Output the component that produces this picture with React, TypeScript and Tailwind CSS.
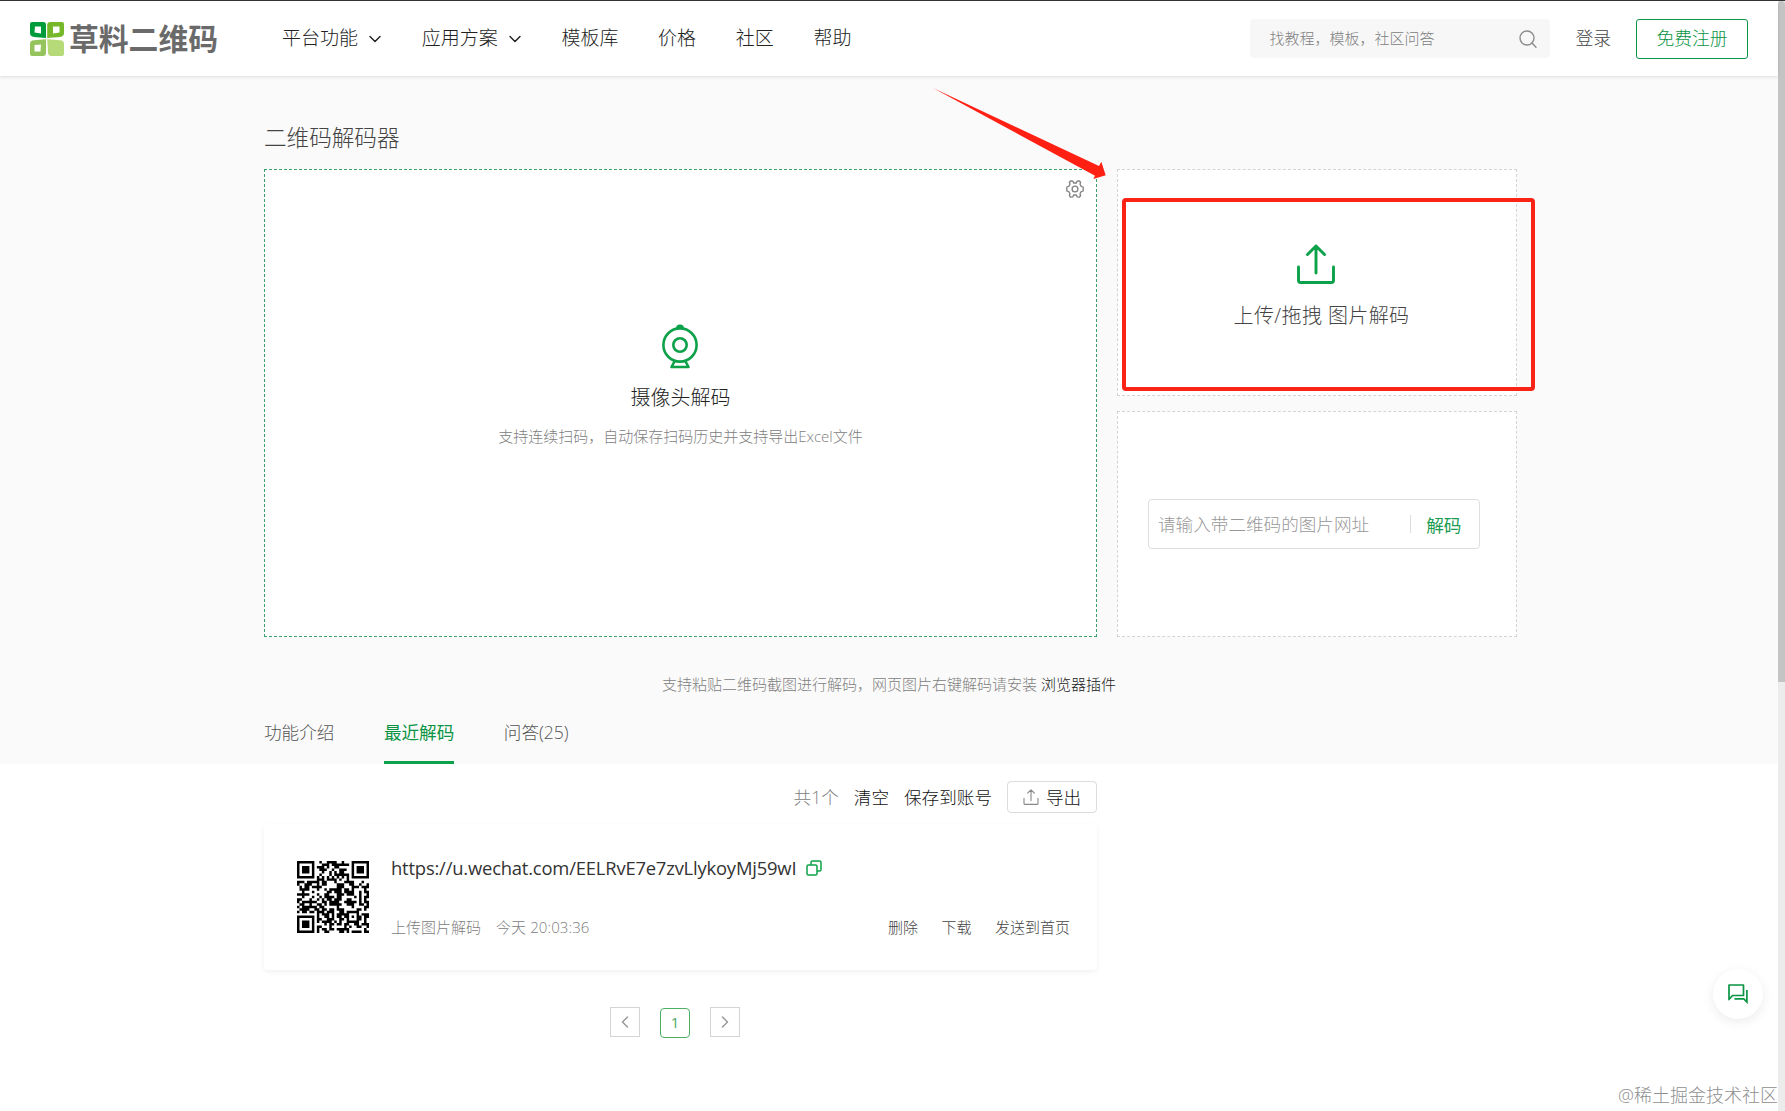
import React from 'react';
import { ChevronDown, ChevronLeft, ChevronRight } from 'lucide-react';

const RECORD_URL = 'https://u.wechat.com/EELRvE7e7zvLlykoyMj59wI';

const NAV_ITEMS = [
  { label: '平台功能', hasMenu: true },
  { label: '应用方案', hasMenu: true },
  { label: '模板库', hasMenu: false },
  { label: '价格', hasMenu: false },
  { label: '社区', hasMenu: false },
  { label: '帮助', hasMenu: false },
];

const TABS = ['功能介绍', '最近解码', '问答(25)'];

// Version 3-L QR code with mask 0: 29x29 modules, 55 data + 15 error correction codewords
const buildQr = (text: string): boolean[][] => {
  const size = 29;
  const mul = (a: number, b: number) => {
    let z = 0;
    for (let i = 7; i >= 0; i--) {
      z = (z << 1) ^ ((z >>> 7) * 0x11d);
      z ^= ((b >>> i) & 1) * a;
    }
    return z;
  };

  const bits: number[] = [];
  const push = (v: number, n: number) => {
    for (let i = n - 1; i >= 0; i--) bits.push((v >>> i) & 1);
  };
  push(4, 4);
  push(text.length, 8);
  for (const c of text) push(c.charCodeAt(0), 8);
  push(0, 4);
  for (let pad = 0xec; bits.length < 440; pad ^= 0xfd) push(pad, 8);

  const data: number[] = [];
  for (let i = 0; i < 440; i += 8) data.push(parseInt(bits.slice(i, i + 8).join(''), 2));

  // Reed-Solomon
  const divisor: number[] = new Array(15).fill(0);
  divisor[14] = 1;
  let root = 1;
  for (let i = 0; i < 15; i++) {
    for (let j = 0; j < 15; j++) {
      divisor[j] = mul(divisor[j], root);
      if (j < 14) divisor[j] ^= divisor[j + 1];
    }
    root = mul(root, 2);
  }
  const ecc: number[] = new Array(15).fill(0);
  data.forEach(b => {
    const f = b ^ (ecc.shift() as number);
    ecc.push(0);
    divisor.forEach((d, i) => { ecc[i] ^= mul(d, f); });
  });
  ecc.forEach(b => push(b, 8));

  const grid: boolean[][] = Array.from({ length: size }, () => new Array(size).fill(false));
  const fixed: boolean[][] = Array.from({ length: size }, () => new Array(size).fill(false));
  const set = (x: number, y: number, on: boolean) => {
    if (x < 0 || y < 0 || x >= size || y >= size) return;
    grid[y][x] = on;
    fixed[y][x] = true;
  };

  for (let i = 0; i < size; i++) {
    set(6, i, i % 2 === 0);
    set(i, 6, i % 2 === 0);
  }
  [[3, 3], [size - 4, 3], [3, size - 4]].forEach(([cx, cy]) => {
    for (let dy = -4; dy <= 4; dy++)
      for (let dx = -4; dx <= 4; dx++) {
        const d = Math.max(Math.abs(dx), Math.abs(dy));
        set(cx + dx, cy + dy, d !== 2 && d !== 4);
      }
  });
  for (let dy = -2; dy <= 2; dy++)
    for (let dx = -2; dx <= 2; dx++)
      set(22 + dx, 22 + dy, Math.max(Math.abs(dx), Math.abs(dy)) !== 1);

  // Format bits
  const info = 1 << 3;
  let rem = info;
  for (let i = 0; i < 10; i++) rem = (rem << 1) ^ ((rem >>> 9) * 0x537);
  const format = ((info << 10) | rem) ^ 0x5412;
  const bit = (i: number) => ((format >>> i) & 1) === 1;
  for (let i = 0; i <= 5; i++) set(8, i, bit(i));
  set(8, 7, bit(6));
  set(8, 8, bit(7));
  set(7, 8, bit(8));
  for (let i = 9; i < 15; i++) set(14 - i, 8, bit(i));
  for (let i = 0; i < 8; i++) set(size - 1 - i, 8, bit(i));
  for (let i = 8; i < 15; i++) set(8, size - 15 + i, bit(i));
  set(8, size - 8, true);

  let n = 0;
  for (let right = size - 1; right >= 1; right -= 2) {
    if (right === 6) right = 5;
    for (let v = 0; v < size; v++)
      for (let j = 0; j < 2; j++) {
        const x = right - j;
        const y = ((right + 1) & 2) === 0 ? size - 1 - v : v;
        if (fixed[y][x]) continue;
        grid[y][x] = (bits[n++] === 1) !== ((x + y) % 2 === 0);
      }
  }
  return grid;
};

const QrCode: React.FC<{ text: string }> = ({ text }) => {
  const d = buildQr(text)
    .map((row, y) => row.map((on, x) => (on ? `M${x} ${y}h1v1h-1z` : '')).join(''))
    .join('');
  return (
    <svg viewBox="0 0 29 29" className="w-[72px] h-[72px] shrink-0">
      <path d={d} fill="#000" />
    </svg>
  );
};

const LogoIcon: React.FC = () => (
  <svg viewBox="0 0 34 34" className="w-[34px] h-[34px]">
    <path fillRule="evenodd" fill="#009c3c" d="M2 0H13.5Q16 0 16 3V16L4 15Q0 14.500 0 11V2Q0 0 2 0ZM5 4.500L4.500 10.500L11 11.500V4.500Z" />
    <path fillRule="evenodd" fill="#76b82a" d="M20.500 0H32Q34 0 34 2V11Q34 14.500 30 15L17.200 16V3Q17.200 0 20.500 0ZM23 4.500V11.500L29.500 10.500V4.500Z" />
    <path fillRule="evenodd" fill="#95c45c" d="M16 17.200V30.500Q16 34 13 34H2Q0 34 0 32V22Q0 18.500 4 18.200ZM11 22.500L4.500 23V29.500H10.500Z" />
    <path fill="#b7da78" d="M17.200 17.200L30 18.200Q34 18.500 34 22V32Q34 34 32 34H21.500Q18 34 18 30.500Z" />
  </svg>
);

const SearchIcon: React.FC = () => (
  <svg viewBox="0 0 18 18" className="w-[18px] h-[18px]" fill="none" stroke="#8c8c8c" strokeWidth={1.4}>
    <circle cx="8" cy="8" r="7" />
    <path d="M13 13L17 17.200" strokeLinecap="round" />
  </svg>
);

const GearIcon: React.FC = () => (
  <svg viewBox="0 0 18 18" className="w-[18px] h-[18px]" fill="none" stroke="#808080" strokeWidth={1.3} strokeLinejoin="round">
    <path d="M4.800 .8L6.900 1.200L7.600 3H10.400L11.100 1.200L13.200 .8L14.600 2.200L14 4.300L15.200 6.400L17.200 7V11L15.200 11.600L14 13.700L14.600 15.800L13.200 17.200L11.100 16.800L10.400 15H7.600L6.900 16.800L4.800 17.200L3.400 15.800L4 13.700L2.800 11.600L.8 11V7L2.800 6.400L4 4.300L3.400 2.200Z" />
    <circle cx="9" cy="9" r="2.900" />
  </svg>
);

const CameraIcon: React.FC = () => (
  <svg viewBox="0 0 36 45" className="w-9 h-[45px] mr-[2px]" fill="none" stroke="#0da149" strokeWidth={2.6}>
    <circle cx="18" cy="21" r="16.600" />
    <circle cx="18" cy="21" r="6.700" />
    <path d="M15.300 4.500A2.700 2.700 0 0 1 20.700 4.500M12.500 37.500L9.500 43H26.500L23.500 37.500" strokeLinejoin="round" />
  </svg>
);

const UploadIcon: React.FC<{ className: string; strokeWidth: number }> = ({ className, strokeWidth }) => (
  <svg viewBox="0 0 38 40" className={className} fill="none" stroke="currentColor" strokeWidth={strokeWidth} strokeLinecap="round" strokeLinejoin="round">
    <path d="M1.500 23V36.500Q1.500 38.500 3.500 38.500H34.500Q36.500 38.500 36.500 36.500V23M19 29V2M10.500 10.500L19 2L27.500 10.500" />
  </svg>
);

const CopyIcon: React.FC = () => (
  <svg viewBox="0 0 16 16" className="w-4 h-4" fill="none" stroke="#0da149" strokeWidth={1.5}>
    <rect x="1" y="5" width="10" height="10" rx="1.500" />
    <path d="M5 5V2.500Q5 1 6.500 1H13.500Q15 1 15 2.500V9.500Q15 11 13.500 11H11" />
  </svg>
);

const ChatIcon: React.FC = () => (
  <svg viewBox="0 0 20 20" className="w-5 h-5" fill="none" stroke="#0b9444" strokeWidth={1.7}>
    <path d="M1 1H15.500V11.500H4.500L1 15.500Z" strokeLinejoin="round" />
    <path d="M18.900 6V18L15.800 14.800H6.500" />
  </svg>
);

const Header: React.FC = () => (
  <header className="flex items-center h-[76px] pl-[30px] pr-[30px] bg-white border-t border-[#333] shadow-[0_1px_3px_rgba(0,0,0,0.12)] relative">
    <div className="flex items-center gap-[5px] w-[252px] shrink-0">
      <LogoIcon />
      <span className="text-[29.800px] font-bold leading-none text-[#6a6a6a] whitespace-nowrap">草料二维码</span>
    </div>
    <nav className="flex items-center gap-[39.700px] text-[19px] text-[#222]">
      {NAV_ITEMS.map(item => (
        <a key={item.label} className="flex items-center whitespace-nowrap">
          {item.label}
          {item.hasMenu && <ChevronDown className="w-5 h-5 ml-[7px] -mr-[3px]" strokeWidth={1.7} />}
        </a>
      ))}
    </nav>
    <div className="ml-auto flex items-center">
      <div className="flex items-center justify-between w-[300px] h-[39px] pl-[19px] pr-[13px] rounded-sm bg-[#f7f7f7] text-[15px] text-[#808080]">
        <span>找教程，模板，社区问答</span>
        <SearchIcon />
      </div>
      <a className="ml-[25px] text-[17.800px] text-[#444]">登录</a>
      <button className="ml-[25px] w-[112px] h-10 border border-[#0b9444] rounded-[3px] text-[17.800px] text-[#0b9444]">免费注册</button>
    </div>
  </header>
);

const CameraPanel: React.FC = () => (
  <div className="relative flex flex-col items-center w-[833px] h-[468px] pt-[154px] bg-white border border-dashed border-[#3ba070]">
    <div className="absolute top-[10px] right-[12px]"><GearIcon /></div>
    <CameraIcon />
    <h2 className="mt-[14px] text-[20px] leading-[30px] text-[#222]">摄像头解码</h2>
    <p className="mt-[12px] text-[15px] leading-[22px] text-[#808080]">支持连续扫码，自动保存扫码历史并支持导出Excel文件</p>
  </div>
);

const UploadPanel: React.FC = () => (
  <div className="relative flex flex-col items-center h-[227px] pt-[74px] bg-white border border-dashed border-[#d4d4d4]">
    <UploadIcon className="w-[38px] h-10 mr-[2px] text-[#0da149]" strokeWidth={2.9} />
    <p className="mt-[17px] pl-[9px] text-[20px] tracking-[0.400px] leading-[30px] text-[#444]">上传/拖拽 图片解码</p>
    <div className="absolute left-[4px] top-[28px] w-[413px] h-[193px] border-4 border-[#f92316] rounded-[4px]" />
  </div>
);

const UrlPanel: React.FC = () => (
  <div className="h-[226px] pt-[87px] pl-[30px] bg-white border border-dashed border-[#d4d4d4]">
    <div className="flex items-center w-[332px] h-[50px] pl-[9px] border border-[#dcdfe0] rounded-[4px] text-[17.600px]">
      <span className="text-[#999]">请输入带二维码的图片网址</span>
      <span className="ml-[41px] w-px h-[18px] bg-[#dcdcdc]" />
      <button className="ml-[15px] pt-[2px] font-normal text-[#1a9b50]">解码</button>
    </div>
  </div>
);

const Arrow: React.FC = () => (
  <svg viewBox="0 0 174 93" className="absolute left-[933px] top-[88px] w-[174px] h-[93px]">
    <path d="M0 0L166 78L168.300 73.700L172.700 87.300L160.300 91L162 87.700Z" fill="#ff2014" />
  </svg>
);

const RecordCard: React.FC = () => (
  <div className="flex w-[833px] h-[146px] pt-[37px] pl-[33px] pr-[27px] bg-white rounded-sm shadow-[0_2px_5px_rgba(0,0,0,0.06)]">
    <QrCode text={RECORD_URL} />
    <div className="flex flex-col flex-1 justify-between ml-[22px] h-[77px]">
      <div className="flex items-center gap-[10px] h-[13px]">
        <span className="text-[18.400px] tracking-[-0.190px] font-normal text-[#333]">{RECORD_URL}</span>
        <CopyIcon />
      </div>
      <div className="flex items-center h-[22px] text-[15px] leading-[22px]">
        <span className="text-[#808080]">上传图片解码</span>
        <span className="ml-[15px] tracking-[0.100px] text-[#808080]">今天 20:03:36</span>
        <div className="ml-auto flex gap-[23.500px] text-[#444]">
          <a>删除</a>
          <a>下载</a>
          <a>发送到首页</a>
        </div>
      </div>
    </div>
  </div>
);

const App: React.FC = () => {
  return (
    <div className="relative flex h-[1111px] w-full overflow-hidden bg-white font-['Open_Sans','Noto_Sans_CJK_SC',sans-serif] font-light">
      <div className="flex-1 min-w-0">
        <Header />
        <section className="h-[688px] pl-[264px] pt-[45px] bg-[#fafafa]">
          <h1 className="text-[22.600px] leading-[34px] text-[#444]">二维码解码器</h1>
          <div className="flex gap-5 mt-[14px]">
            <CameraPanel />
            <div className="flex flex-col gap-[15px] w-[400px]">
              <UploadPanel />
              <UrlPanel />
            </div>
          </div>
          <p className="mt-[36px] w-[1250px] text-center text-[15px] leading-[22px] text-[#808080]">
            支持粘贴二维码截图进行解码，网页图片右键解码请安装 <a className="text-[#222]">浏览器插件</a>
          </p>
          <div className="flex gap-[49.500px] mt-[17px] text-[17.600px] text-[#555]">
            {TABS.map((tab, i) => (
              <a
                key={tab}
                className={i === 1
                  ? 'h-[52px] leading-[40px] text-[#0b9444] font-normal border-b-[3px] border-[#0da149]'
                  : 'h-[52px] leading-[40px]'}
              >
                {tab}
              </a>
            ))}
          </div>
        </section>
        <section className="w-[1097px] pl-[264px] pt-[17px]">
          <div className="flex items-center justify-end gap-[15px] h-8 text-[17.600px] text-[#111]">
            <span className="text-[#808080]">共1个</span>
            <a>清空</a>
            <a>保存到账号</a>
            <button className="flex items-center justify-center gap-[7px] w-[90px] h-8 border border-[#dcdcdc] rounded-sm">
              <UploadIcon className="w-4 h-4 text-[#888]" strokeWidth={2.8} />
              导出
            </button>
          </div>
          <div className="mt-[11px]">
            <RecordCard />
          </div>
          <div className="flex items-start gap-5 mt-[37px] ml-[346px]">
            <button className="flex items-center justify-center w-[30px] h-[30px] border border-[#d4d4d4] text-[#999]">
              <ChevronLeft className="w-5 h-5" strokeWidth={1.8} />
            </button>
            <button className="mt-px w-[30px] h-[30px] pb-px border border-[#4caf63] rounded-sm text-[15px] leading-none font-normal text-[#4ba862]">1</button>
            <button className="flex items-center justify-center w-[30px] h-[30px] border border-[#d4d4d4] text-[#999]">
              <ChevronRight className="w-5 h-5" strokeWidth={1.8} />
            </button>
          </div>
        </section>
      </div>
      <div className="w-[7px] border-t border-[#333] bg-[#ececec]">
        <div className="h-[681px] bg-[#c4c4c4] rounded-t-sm" />
      </div>
      <Arrow />
      <button className="absolute left-[1713px] top-[969px] flex items-center justify-center w-[50px] h-[50px] rounded-full bg-white shadow-[0_3px_12px_rgba(0,0,0,0.08)]">
        <ChatIcon />
      </button>
      <span className="absolute right-[7px] bottom-[3px] text-[18px] leading-[26px] text-[#8f8f8f] whitespace-nowrap">@稀土掘金技术社区</span>
    </div>
  );
};

export default App;
